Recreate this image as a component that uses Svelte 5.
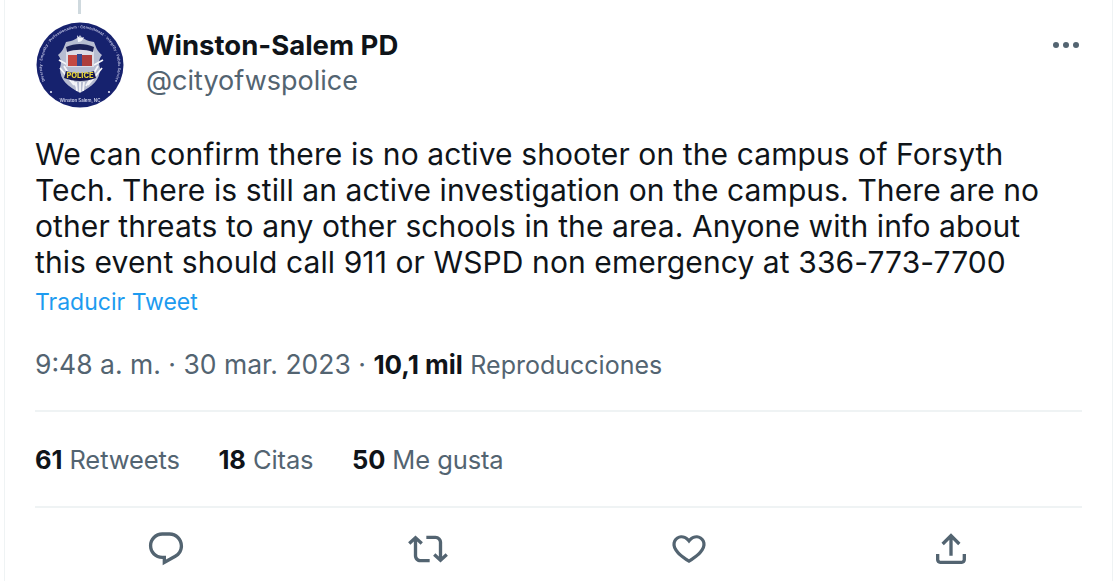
<script>
  const stats = [
    { n: '61', l: 'Retweets' },
    { n: '18', l: 'Citas' },
    { n: '50', l: 'Me gusta' }
  ];
</script>

<div class="frame">
  <article class="tweet">
    <div class="thread"></div>
    <header class="head">
      <svg class="avatar" viewBox="0 0 88 86" aria-hidden="true">
        <defs>
          <filter id="soft" x="-5%" y="-5%" width="110%" height="110%"><feGaussianBlur stdDeviation="0.35" /></filter>
          <path id="ring" d="M9 59A38 38 0 1 1 79 59" fill="none" />
        </defs>
        <g filter="url(#soft)">
          <ellipse cx="44" cy="43" rx="43.500" ry="42.500" fill="#17206e" />
          <text class="ringtext"><textPath href="#ring" textLength="150" lengthAdjust="spacing">Diversity · Empathy · Professionalism · Commitment · Integrity · Public Service</textPath></text>
          <text class="city" x="44" y="80" text-anchor="middle">Winston Salem, NC</text>
          <circle cx="15" cy="70" r="1.100" fill="#dfe3f2" />
          <circle cx="73" cy="70" r="1.100" fill="#dfe3f2" />
          <path d="M44 13c-1.500 3-7 6-14 7-2 5-3 9-8 13 4 5 3 9 2 13 0 13 8 18 20 25 12-7 20-12 20-25-1-4-2-8 2-13-5-4-6-8-8-13-7-1-12.500-4-14-7z" fill="#b7bdd1" />
          <path d="M24 46l14 17M28 44l12 20M62 44 50 64M66 46 52 63M23 38l9 5M67 38l-9 5M44 60v10M40 60l1 9M48 60l-1 9" stroke="#f4f5f9" stroke-width="1.800" fill="none" />
          <path d="M41 13c2 3 3 4 7 2-1 3-3 5-6 5z" fill="#f4f5fa" />
          <path d="M30 26c9-4 19-4 28 0v19H30z" fill="#dcdde6" />
          <path d="M30 25c9-4 19-4 28 0l-1 5c-8-3-18-3-26 0z" fill="#1d2158" />
          <rect x="32" y="33" width="9" height="11" fill="#c44a43" />
          <rect x="41" y="32" width="5" height="12" fill="#34478f" />
          <rect x="46" y="33" width="10" height="11" fill="#ad3c3b" />
          <path d="M30 49c9 3 19 3 28 0l2 7c-10 4-22 4-32 0z" fill="#16194f" />
          <text class="police" x="44" y="56" text-anchor="middle">POLICE</text>
        </g>
      </svg>
      <div class="names">
        <div class="name">Winston-Salem PD</div>
        <div class="handle">@cityofwspolice</div>
      </div>
      <svg class="more" viewBox="0 0 30 8" aria-hidden="true">
        <circle cx="4" cy="4" r="3" /><circle cx="14" cy="4" r="3" /><circle cx="24" cy="4" r="3" />
      </svg>
    </header>

    <p class="body">We can confirm there is no active shooter on the campus of Forsyth<br />Tech. There is still an active investigation on the campus. There are no<br />other threats to any other schools in the area. Anyone with info about<br />this event should call 911 or WSPD non emergency at 336-773-7700</p>

    <div class="translate">Traducir Tweet</div>

    <div class="meta">9:48 a. m. · 30 mar. 2023 · <b>10,1 mil</b> <span class="views">Reproducciones</span></div>

    <div class="stats">
      {#each stats as s}
        <span class="stat"><b>{s.n}</b> {s.l}</span>
      {/each}
    </div>

    <div class="actions">
      <svg viewBox="0 0 24 24" aria-hidden="true"><path d="M1.751 10c0-4.420 3.584-8 8.005-8h4.366c4.490 0 8.129 3.640 8.129 8.130 0 2.960-1.607 5.680-4.196 7.110l-8.054 4.460v-3.690h-.067c-4.490.1-8.183-3.510-8.183-8.010zm8.005-6c-3.317 0-6.005 2.690-6.005 6 0 3.370 2.770 6.080 6.138 6.010l.351-.010h1.761v2.300l5.087-2.810c1.951-1.080 3.163-3.130 3.163-5.360 0-3.390-2.744-6.130-6.129-6.130H9.756z"/></svg>
      <svg viewBox="0 0 24 24" aria-hidden="true"><path d="M4.500 3.880l4.432 4.140-1.364 1.460L5.500 7.550V16c0 1.100.896 2 2 2H13v2H7.500c-2.209 0-4-1.790-4-4V7.550L1.432 9.480.068 8.020 4.500 3.880zM16.500 6H11V4h5.500c2.209 0 4 1.790 4 4v8.450l2.068-1.930 1.364 1.460-4.432 4.140-4.432-4.140 1.364-1.460 2.068 1.930V8c0-1.100-.896-2-2-2z"/></svg>
      <svg viewBox="0 0 24 24" aria-hidden="true"><path d="M16.697 5.500c-1.222-.06-2.679.51-3.890 2.160l-.805 1.090-.806-1.090C9.984 6.010 8.526 5.440 7.304 5.500c-1.243.07-2.349.78-2.940 1.950-.593 1.180-.571 2.770.572 4.560 1.105 1.730 3.148 3.780 7.065 6.120 3.915-2.340 5.957-4.390 7.062-6.120 1.143-1.790 1.165-3.380.572-4.560-.591-1.170-1.697-1.880-2.938-1.950zm3.998 7.590c-1.367 2.140-3.829 4.460-8.193 7.050l-.5.290-.5-.29c-4.365-2.590-6.828-4.910-8.196-7.050-1.437-2.250-1.640-4.490-.703-6.340.921-1.830 2.693-2.950 4.596-3.050 1.622-.08 3.284.56 4.803 1.990 1.518-1.430 3.180-2.070 4.802-1.990 1.903.1 3.674 1.220 4.596 3.050.937 1.850.734 4.090-.705 6.340z"/></svg>
      <svg viewBox="0 0 24 24" aria-hidden="true"><path d="M12 2.590l5.700 5.700-1.410 1.420L13 6.410V16h-2V6.410l-3.300 3.300-1.410-1.420L12 2.590zM21 15l-.02 3.510c0 1.380-1.120 2.490-2.500 2.490H5.500C4.110 21 3 19.880 3 18.500V15h2v3.500c0 .280.220.5.500.5h12.980c.280 0 .5-.220.5-.5L19 15h2z"/></svg>
    </div>
  </article>
</div>

<style>
  :global(body) {
    margin: 0;
    background: #fff;
  }
  .frame {
    width: 1120px;
    height: 581px;
    overflow: hidden;
    box-sizing: border-box;
    padding: 0 7px 0 4px;
    font-family: Inter, "Liberation Sans", sans-serif;
  }
  .tweet {
    position: relative;
    height: 581px;
    box-sizing: border-box;
    padding: 22px 30px 0 30px;
    border-left: 1px solid #eff3f4;
    border-right: 1px solid #eff3f4;
    color: #0f1419;
  }
  .thread {
    position: absolute;
    left: 73px;
    top: 0;
    width: 3px;
    height: 14px;
    background: #cfd9de;
  }
  .head {
    display: flex;
    align-items: flex-start;
    height: 85px;
  }
  .avatar {
    width: 88px;
    height: 86px;
    margin-left: 1px;
    flex: none;
  }
  .names {
    margin-left: 22px;
    padding-top: 7px;
    flex: 1;
  }
  .name {
    font-size: 27.500px;
    font-weight: 700;
    line-height: 32px;
  }
  .handle {
    margin-top: 2px;
    font-size: 27px;
    line-height: 36px;
    color: #536471;
  }
  .more {
    width: 30px;
    height: 8px;
    margin: 19px 0 0 0;
    fill: #536471;
  }
  .ringtext {
    font-size: 3.800px;
    font-weight: 600;
    fill: #c3c9e6;
  }
  .city {
    font-size: 4.400px;
    font-weight: 600;
    fill: #cfd4ea;
  }
  .police {
    font-size: 7.500px;
    font-weight: 800;
    fill: #e6d23a;
  }
  .body {
    margin: 29px 0 0;
    font-size: 30px;
    letter-spacing: 0.1px;
    line-height: 36px;
    white-space: nowrap;
  }
  .translate {
    margin-top: 8px;
    font-size: 23px;
    line-height: 28px;
    color: #1d9bf0;
  }
  .meta {
    margin-top: 33px;
    font-size: 26.500px;
    line-height: 30px;
    color: #536471;
    padding-bottom: 30px;
    border-bottom: 2px solid #eff3f4;
  }
  .meta b {
    font-size: 26px;
    color: #0f1419;
  }
  .views {
    font-size: 25px;
  }
  .stats {
    display: flex;
    gap: 38.500px;
    height: 96px;
    box-sizing: border-box;
    padding-top: 33px;
    font-size: 25.500px;
    letter-spacing: -0.1px;
    line-height: 30px;
    color: #536471;
    border-bottom: 2px solid #eff3f4;
  }
  .stat b {
    color: #0f1419;
  }
  .actions {
    display: flex;
    justify-content: space-around;
    padding-top: 21px;
  }
  .actions svg {
    width: 40px;
    height: 40px;
    fill: #536471;
  }
</style>
